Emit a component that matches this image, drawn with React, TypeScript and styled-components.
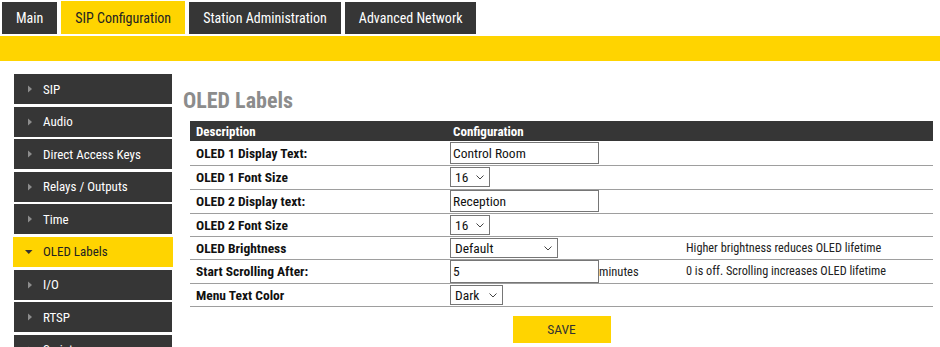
import React from 'react';
import styled, { createGlobalStyle } from 'styled-components';

const FONT = `"Roboto Condensed", "Liberation Sans Narrow", "Arial Narrow", "DejaVu Sans Condensed", Roboto, sans-serif`;
const YELLOW = '#ffd400';
const DARK = '#363636';

const Global = createGlobalStyle`
  html, body { margin: 0; padding: 0; background: #fff; overflow: hidden; }
  body { font-family: ${FONT}; color: #111; }
  * { box-sizing: border-box; }
`;

const TabBar = styled.nav`
  display: flex;
  align-items: flex-end;
  gap: 4px;
  padding-left: 2px;
  height: 34px;
`;

const Tab = styled.div<{ $active?: boolean }>`
  height: ${(p) => (p.$active ? 33 : 32)}px;
  padding: 0 14px;
  display: flex;
  align-items: center;
  background: ${(p) => (p.$active ? YELLOW : DARK)};
  color: ${(p) => (p.$active ? '#222' : '#fff')};
  font-size: 14px;
  white-space: nowrap;
`;

const YellowBar = styled.div`
  height: 25px;
  margin-top: 2px;
  background: ${YELLOW};
`;

const Body = styled.div`
  display: flex;
  align-items: flex-start;
  padding: 13px 0 0 14px;
  gap: 11px;
`;

const Sidebar = styled.ul`
  list-style: none;
  margin: 0;
  padding: 0;
  width: 158px;
  flex: none;
`;

const SideItem = styled.li<{ $active?: boolean }>`
  height: 30px;
  margin: ${(p) => (p.$active ? '0 -1px 2.6px' : '0 0 2.6px')};
  padding-left: ${(p) => (p.$active ? 12 : 11)}px;
  display: flex;
  align-items: center;
  gap: 10px;
  background: ${(p) => (p.$active ? YELLOW : DARK)};
  color: ${(p) => (p.$active ? '#222' : '#fff')};
  font-size: 13px;
  white-space: nowrap;
`;

const Arrow = styled.svg`
  width: 8px;
  height: 8px;
  flex: none;
`;

const Content = styled.main`
  width: 750px;
`;

const Heading = styled.h1`
  margin: 15px 0 8px;
  font-size: 22px;
  line-height: 24px;
  font-weight: 700;
  color: #8c8c8c;
`;

const Table = styled.table`
  margin-left: 7px;
  width: 743px;
  border-collapse: collapse;
  table-layout: fixed;
`;

const Th = styled.th<{ $w?: number }>`
  background: ${DARK};
  color: #fff;
  font-size: 13px;
  font-weight: 700;
  text-align: left;
  height: 20px;
  padding: 0 6px;
  ${(p) => (p.$w ? `width: ${p.$w}px;` : '')}
`;

const Tr = styled.tr<{ $h: number }>`
  height: ${(p) => p.$h}px;
`;

const LabelCell = styled.td`
  font-size: 13.5px;
  font-weight: 700;
  padding: 0 6px;
  border-bottom: 1px solid #9e9e9e;
  color: #111;
  white-space: nowrap;
`;

const ConfigCell = styled.td`
  padding: 0 3px;
  border-bottom: 1px solid #9e9e9e;
`;

const NoteCell = styled.td`
  padding: 0 3px;
  font-size: 12.25px;
  color: #222;
  border-bottom: 1px solid #9e9e9e;
  white-space: nowrap;
`;

const InlineRow = styled.div`
  display: flex;
  align-items: center;
  font-size: 12.5px;
  color: #222;
`;

const TextInput = styled.input<{ $h?: number }>`
  width: 149px;
  height: ${(p) => p.$h ?? 22}px;
  border: 1px solid #767676;
  padding: 0 2px;
  font-family: ${FONT};
  font-size: 13.5px;
  color: #111;
  display: block;
  outline: none;
`;

const SelectWrap = styled.div<{ $w: number }>`
  position: relative;
  width: ${(p) => p.$w}px;
  height: 20px;
`;

const Select = styled.select`
  appearance: none;
  -webkit-appearance: none;
  width: 100%;
  height: 100%;
  border: 1px solid #767676;
  border-radius: 0;
  background: #fff;
  padding: 0 0 0 4px;
  font-family: ${FONT};
  font-size: 13.5px;
  color: #111;
  outline: none;
`;

const Chevron = styled.svg`
  position: absolute;
  right: 6px;
  top: 8px;
  width: 8px;
  height: 5px;
  pointer-events: none;
`;

const SaveRow = styled.div`
  margin-left: 7px;
  width: 743px;
  display: flex;
  justify-content: center;
  padding-top: 9px;
`;

const SaveButton = styled.button`
  width: 98px;
  height: 27px;
  border: none;
  background: ${YELLOW};
  color: #333;
  font-family: ${FONT};
  font-size: 13.5px;
`;

const RightArrow = () => (
  <Arrow viewBox="0 0 8 8">
    <polygon points="3,0.5 7,4 3,7.5" fill="#8d8d8d" />
  </Arrow>
);

const DownArrow = () => (
  <Arrow viewBox="0 0 8 8">
    <polygon points="0,2 7.5,2 3.75,6" fill="#333" />
  </Arrow>
);

const SelectBox = ({ w, value, options }: { w: number; value: string; options: string[] }) => (
  <SelectWrap $w={w}>
    <Select defaultValue={value}>
      {options.map((o) => (
        <option key={o}>{o}</option>
      ))}
    </Select>
    <Chevron viewBox="0 0 8 5">
      <polyline points="0.5,0.5 4,4 7.5,0.5" fill="none" stroke="#444" strokeWidth="1" />
    </Chevron>
  </SelectWrap>
);

const tabs = ['Main', 'SIP Configuration', 'Station Administration', 'Advanced Network'];
const menu = ['SIP', 'Audio', 'Direct Access Keys', 'Relays / Outputs', 'Time', 'OLED Labels', 'I/O', 'RTSP', 'Scripts'];
const sizes = ['8', '10', '12', '14', '16', '18', '20', '24'];

export default function App() {
  return (
    <>
      <Global />
      <TabBar>
        {tabs.map((t) => (
          <Tab key={t} $active={t === 'SIP Configuration'}>
            {t}
          </Tab>
        ))}
      </TabBar>
      <YellowBar />
      <Body>
        <Sidebar>
          {menu.map((m) => {
            const active = m === 'OLED Labels';
            return (
              <SideItem key={m} $active={active}>
                {active ? <DownArrow /> : <RightArrow />}
                {m}
              </SideItem>
            );
          })}
        </Sidebar>
        <Content>
          <Heading>OLED Labels</Heading>
          <Table>
            <thead>
              <tr>
                <Th $w={257}>Description</Th>
                <Th $w={236}>Configuration</Th>
                <Th />
              </tr>
            </thead>
            <tbody>
              <Tr $h={24}>
                <LabelCell>OLED 1 Display Text:</LabelCell>
                <ConfigCell>
                  <TextInput defaultValue="Control Room" />
                </ConfigCell>
                <NoteCell />
              </Tr>
              <Tr $h={24}>
                <LabelCell>OLED 1 Font Size</LabelCell>
                <ConfigCell>
                  <SelectBox w={40} value="16" options={sizes} />
                </ConfigCell>
                <NoteCell />
              </Tr>
              <Tr $h={24}>
                <LabelCell>OLED 2 Display text:</LabelCell>
                <ConfigCell>
                  <TextInput defaultValue="Reception" />
                </ConfigCell>
                <NoteCell />
              </Tr>
              <Tr $h={23}>
                <LabelCell>OLED 2 Font Size</LabelCell>
                <ConfigCell>
                  <SelectBox w={40} value="16" options={sizes} />
                </ConfigCell>
                <NoteCell />
              </Tr>
              <Tr $h={23}>
                <LabelCell>OLED Brightness</LabelCell>
                <ConfigCell>
                  <SelectBox w={108} value="Default" options={['Low', 'Default', 'High']} />
                </ConfigCell>
                <NoteCell>Higher brightness reduces OLED lifetime</NoteCell>
              </Tr>
              <Tr $h={24}>
                <LabelCell>Start Scrolling After:</LabelCell>
                <ConfigCell>
                  <InlineRow>
                    <TextInput defaultValue="5" $h={23} />
                    minutes
                  </InlineRow>
                </ConfigCell>
                <NoteCell>0 is off. Scrolling increases OLED lifetime</NoteCell>
              </Tr>
              <Tr $h={23}>
                <LabelCell>Menu Text Color</LabelCell>
                <ConfigCell>
                  <SelectBox w={53} value="Dark" options={['Dark', 'Light']} />
                </ConfigCell>
                <NoteCell />
              </Tr>
            </tbody>
          </Table>
          <SaveRow>
            <SaveButton>SAVE</SaveButton>
          </SaveRow>
        </Content>
      </Body>
    </>
  );
}
